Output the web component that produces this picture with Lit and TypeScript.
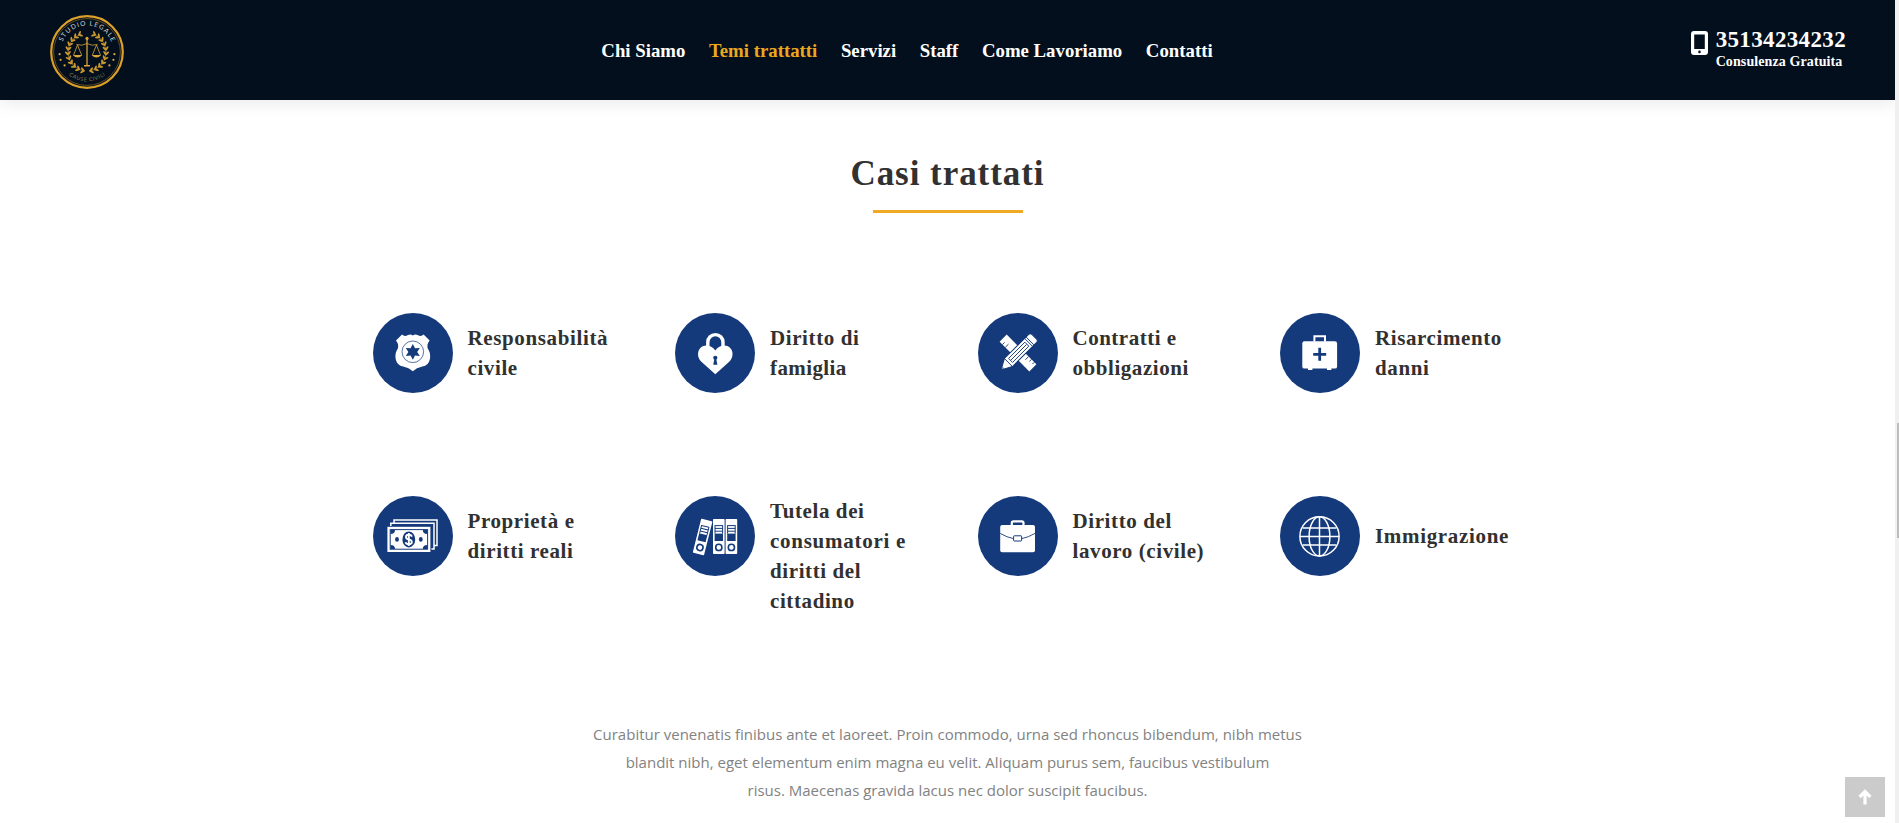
import { LitElement, html, svg, css } from "lit";
import { customElement, property } from "lit/decorators.js";

const INK = "#143a7b";

const badge = svg`
  <path fill="#fff" d="M29 21.5 Q31.5 24 35 22 Q37.5 20.5 39.8 22.6 Q42 20.5 44.6 22 Q48 24 50.6 21.5 L56.6 27.5 Q52.6 32.6 55.6 37 Q58 41 56.8 46.5 Q55.6 52.4 49.4 53.6 Q43.5 54.6 39.8 58.2 Q36 54.6 30.2 53.6 Q24 52.4 22.8 46.5 Q21.6 41 24 37 Q27 32.6 23 27.5 Z"/>
  <circle cx="39.8" cy="38.8" r="10.8" fill="none" stroke="${INK}" stroke-width=".7"/>
  <path fill="${INK}" d="M39.8 31 L42 35.2 L46.8 34.9 L44.2 38.9 L46.8 42.9 L42 42.6 L39.8 46.8 L37.6 42.6 L32.8 42.9 L35.4 38.9 L32.8 34.9 L37.6 35.2 Z"/>`;

const heartLock = svg`
  <path fill="none" stroke="#fff" stroke-width="3.4" d="M32.8 36 V29.2 A7.6 7.6 0 0 1 48 29.2 V36"/>
  <path fill="#fff" d="M40.3 37.6 C36.6 32 29.4 31 25.6 34.8 C21.8 38.6 22.4 45 26.4 48.8 L40.3 61.2 L54.2 48.8 C58.2 45 58.8 38.6 55 34.8 C51.2 31 44 32 40.3 37.6 Z"/>
  <circle cx="40.3" cy="44.8" r="2.1" fill="${INK}"/><path fill="${INK}" d="M39.5 45.5 H41.1 L42.4 51.8 H38.2 Z"/>`;

const tools = svg`
  <g transform="rotate(45 40 40)">
    <rect x="19" y="35" width="42" height="10" fill="#fff"/>
    <path stroke="${INK}" stroke-width=".9" d="M23 45 V42 M27 45 V40.5 M54 35 V38 M58 35 V37.5 M50 35 V39.5"/>
  </g>
  <g transform="rotate(-45 40 40)">
    <path fill="#fff" stroke="${INK}" stroke-width="1" d="M26.5 34.3 H60.4 Q63 34.3 63 37 V43 Q63 45.7 60.4 45.7 H26.5 L16 40 Z"/>
    <path fill="none" stroke="${INK}" stroke-width=".9" d="M26.5 34.5 V45.5 M55 34.5 V45.5 M57 34.5 V45.5 M29.5 37.2 H52.5 V42.8 H29.5 Z M30 40 H52"/>
    <path fill="${INK}" d="M16 40 L19.5 38.3 V41.7 Z" opacity=".5"/>
  </g>`;

const firstAid = svg`
  <path fill="none" stroke="#fff" stroke-width="2" d="M34.4 28.5 V23.3 H45 V28.5"/>
  <rect x="22.3" y="28.2" width="34.8" height="27.4" rx="2.2" fill="#fff"/>
  <path fill="#fff" d="M28 55 H32.4 V57 H28 Z M47 55 H51.4 V57 H47 Z"/>
  <path fill="none" stroke="${INK}" stroke-width="2.8" d="M39.7 34.8 V47.8 M33.2 41.3 H46.2"/>`;

const banknotes = svg`
  <path fill="none" stroke="#fff" stroke-width="1.5" d="M21 26.5 V24 H64 V49.5 H61.5 M17.8 30 V27.3 H61 V53 H58.4"/>
  <rect x="14.4" y="30.8" width="43" height="25.2" fill="#fff"/>
  <rect x="17.2" y="33.6" width="37.4" height="19.6" fill="none" stroke="${INK}" stroke-width="1"/>
  <path fill="${INK}" d="M17.5 34 H22 Q22 38 17.5 38 Z M54.3 34 H49.8 Q49.8 38 54.3 38 Z M17.5 53 H22 Q22 49 17.5 49 Z M54.3 53 H49.8 Q49.8 49 54.3 49 Z"/>
  <ellipse cx="35.8" cy="43.4" rx="6.4" ry="8" fill="${INK}"/>
  <ellipse cx="24" cy="43.4" rx="1.9" ry="2.4" fill="${INK}"/><ellipse cx="47.8" cy="43.4" rx="1.9" ry="2.4" fill="${INK}"/>
  <path fill="none" stroke="#fff" stroke-width="1.9" d="M39 40.6 Q38.2 38.8 35.8 38.8 Q33 38.8 33 41 Q33 43 35.8 43.4 Q38.8 43.9 38.8 46 Q38.8 48.2 35.8 48.2 Q33.2 48.2 32.5 46.2 M35.8 37 V50"/>`;

const binder = svg`
  <rect x="0" y="0" width="11.6" height="35" rx=".8" fill="#fff"/>
  <path fill="none" stroke="${INK}" stroke-width="1" d="M2 6.6 H9.6 M2 9.4 H9.6 M2 12.2 H9.6 M2 6.2 V14.6 M9.6 6.2 V14.6"/>
  <rect x="1.6" y="14.6" width="8.4" height="7.4" fill="${INK}"/>
  <circle cx="5.8" cy="28.4" r="3.1" fill="none" stroke="${INK}" stroke-width="1.6"/>`;

const binders = svg`
  <g transform="translate(26.2 22.6) rotate(14)">${binder}</g>
  <g transform="translate(38 23)">${binder}</g>
  <g transform="translate(50.6 23)">${binder}</g>`;

const briefcase = svg`
  <path fill="none" stroke="#fff" stroke-width="2.2" d="M33.8 29.5 V27 Q33.8 25.3 35.5 25.3 H43.8 Q45.5 25.3 45.5 27 V29.5"/>
  <rect x="22.2" y="29" width="34.8" height="27.2" rx="2" fill="#fff"/>
  <path fill="none" stroke="${INK}" stroke-width=".9" d="M22.2 37.4 Q29 41.4 35.4 42.6 M57 37.4 Q50.2 41.4 43.8 42.6"/>
  <rect x="35.6" y="39.8" width="8" height="5.2" rx=".6" fill="none" stroke="${INK}" stroke-width="1"/>`;

const globe = svg`
  <g fill="none" stroke="#fff" stroke-width="1.5">
    <circle cx="39.5" cy="40.4" r="19.6"/>
    <ellipse cx="39.5" cy="40.4" rx="10.4" ry="19.6"/>
    <path d="M39.5 20.8 V60 M19.9 40.4 H59.1 M22.6 32 H56.4 M22.6 49 H56.4"/>
  </g>`;

interface Line { text: string; track: number }
const cases: { icon: unknown; lines: Line[] }[] = [
  { icon: badge, lines: [{ text: "Responsabilità", track: 0.63 }, { text: "civile", track: 0.6 }] },
  { icon: heartLock, lines: [{ text: "Diritto di", track: 0.6 }, { text: "famiglia", track: 0.4 }] },
  { icon: tools, lines: [{ text: "Contratti e", track: 0.5 }, { text: "obbligazioni", track: 0.55 }] },
  { icon: firstAid, lines: [{ text: "Risarcimento", track: 0.6 }, { text: "danni", track: 0.6 }] },
  { icon: banknotes, lines: [{ text: "Proprietà e", track: 0.6 }, { text: "diritti reali", track: 0.6 }] },
  { icon: binders, lines: [{ text: "Tutela dei", track: 0.6 }, { text: "consumatori e", track: 0.73 }, { text: "diritti del", track: 0.6 }, { text: "cittadino", track: 0.6 }] },
  { icon: briefcase, lines: [{ text: "Diritto del", track: 0.6 }, { text: "lavoro (civile)", track: 0.6 }] },
  { icon: globe, lines: [{ text: "Immigrazione", track: 0.67 }] },
];

const links = ["Chi Siamo", "Temi trattatti", "Servizi", "Staff", "Come Lavoriamo", "Contatti"];

@customElement("firm-logo")
class FirmLogo extends LitElement {
  static styles = css`
    :host { display: block; width: 76px; height: 76px; }
    .mark { display: block; }
    .name { font: 6.6px "Lato", "Open Sans", sans-serif; fill: #d5d8d6; }
    .motto { font: 5.2px "Lato", "Open Sans", sans-serif; fill: #8b7a4a; }
  `;
  render() {
    const leaves = [];
    for (let i = 0; i < 11; i++) {
      const a = 100 + i * 14.5;
      leaves.push(svg`<g transform="rotate(${a} 38 38) translate(57 38)">
        <ellipse cx="1.6" cy="0" rx="2.5" ry="1" transform="rotate(48)"/>
        <ellipse cx="-1.6" cy="0" rx="2.5" ry="1" transform="rotate(-48)"/>
      </g>`);
    }
    const side = svg`<path fill="none" stroke="#c9982f" stroke-width=".6" d="M36 57 A19 19 0 0 1 31 20.4"/>${leaves}`;
    return html`<svg class="mark" width="76" height="76" viewBox="0 0 76 76">
      <circle cx="38" cy="38" r="35.8" fill="none" stroke="#dba02a" stroke-width="2.2"/>
      <circle cx="38" cy="38" r="33.4" fill="none" stroke="#7a5c20" stroke-width=".8"/>
      <path id="top" fill="none" d="M11.5 38 A26.5 26.5 0 0 1 64.5 38"/>
      <path id="bottom" fill="none" d="M8.6 38 A29.4 29.4 0 0 0 67.4 38"/>
      <text class="name" text-anchor="middle" textLength="62"><textPath href="#top" startOffset="50%" textLength="62">STUDIO LEGALE</textPath></text>
      <text class="motto" text-anchor="middle"><textPath href="#bottom" startOffset="50%" textLength="39">CAUSE CIVILI</textPath></text>
      <g fill="#c9982f">${side}</g>
      <g fill="#c9982f" transform="matrix(-1 0 0 1 76 0)">${side}</g>
      <g fill="none" stroke="#d9a43a" stroke-width=".8">
        <path stroke-width="1.3" d="M38 24 V51"/>
        <path d="M27.5 30.5 Q33 32.4 38 29.5 Q43 32.4 48.5 30.5 M28.5 31 L24.6 41 M28.5 31 L32.6 41 M47.5 31 L43.4 41 M47.5 31 L51.4 41"/>
      </g>
      <g fill="#d9a43a">
        <path d="M23.8 41 H33.4 Q28.6 46 23.8 41 Z M42.6 41 H52.2 Q47.4 46 42.6 41 Z M35 51 H41 V52.4 H35 Z"/>
        <circle cx="38" cy="24.4" r="1.6"/>
        <circle cx="10.6" cy="40.2" r="1.1"/><circle cx="11.6" cy="45.8" r="1.1"/><circle cx="15.6" cy="51.4" r="1.1"/>
        <circle cx="65.4" cy="40.2" r="1.1"/><circle cx="64.4" cy="45.8" r="1.1"/><circle cx="60.4" cy="51.4" r="1.1"/>
      </g>
    </svg>`;
  }
}

@customElement("case-card")
class CaseCard extends LitElement {
  @property({ attribute: false }) icon: unknown;
  @property({ attribute: false }) lines: Line[] = [];
  static styles = css`
    :host { display: flex; align-items: flex-start; gap: 15px; padding-left: 30px; }
    .disc { flex: none; display: block; width: 80px; height: 80px; border-radius: 50%; background: #143a7b; }
    .label { margin: 0; min-height: 80px; display: flex; flex-direction: column; justify-content: center; font: bold 21px/30px "Liberation Serif", serif; color: #313131; white-space: nowrap; }
    .line { display: block; }
  `;
  render() {
    return html`<svg class="disc" viewBox="0 0 80 80">${this.icon}</svg>
      <h3 class="label">${this.lines.map((l) => html`<span class="line" style="letter-spacing:${l.track}px">${l.text}</span>`)}</h3>`;
  }
}

@customElement("app-root")
class AppRoot extends LitElement {
  static styles = css`
    :host { display: flex; position: relative; height: 823px; overflow: hidden; background: #fff; font-family: "Liberation Serif", serif; }
    .page { flex: 1; display: flex; flex-direction: column; align-items: center; }
    .bar { align-self: stretch; box-sizing: border-box; height: 100px; flex: none; display: grid; grid-template-columns: 1fr auto 1fr; align-items: center; padding: 0 49px; background: #030f1c; box-shadow: 0 2px 18px rgba(0, 0, 0, 0.1); color: #fff; }
    .logo { margin-top: 3px; }
    .nav { display: flex; gap: 23.6px; font: bold 18.8px/28px "Liberation Serif", serif; margin-right: 81px; margin-top: 2px; }
    .link { color: #fff; text-decoration: none; white-space: nowrap; }
    .active { color: #eda71f; }
    .call { justify-self: end; display: flex; gap: 8px; }
    .phone { margin-top: 3px; }
    .number { font: bold 23px/24px "Liberation Serif", serif; letter-spacing: 0.35px; }
    .note { font: bold 14px/20px "Liberation Serif", serif; letter-spacing: 0.1px; }
    .title { margin: 51px 0 0; font: bold 35px/45px "Liberation Serif", serif; letter-spacing: 0.95px; color: #313131; }
    .rule { width: 150px; height: 3px; margin-top: 14px; background: #f0a922; }
    .grid { width: 1210px; margin-top: 100px; display: grid; grid-template-columns: repeat(4, 1fr); row-gap: 103px; }
    .blurb { margin: 104px 0 0; text-align: center; font: 15px/28px "Open Sans", sans-serif; color: #828282; }
    .track { width: 4px; flex: none; box-sizing: border-box; padding: 423px 0 0 2px; background: #f0f0f0; }
    .thumb { height: 115px; background: #bdbdbd; }
    .up { position: absolute; right: 14px; bottom: 6px; width: 40px; height: 40px; padding: 0; border: 0; background: #cbcbcb; display: grid; place-items: center; }
  `;
  render() {
    return html`
      <div class="page">
        <header class="bar">
          <firm-logo class="logo"></firm-logo>
          <nav class="nav">${links.map((t) => html`<a class="link ${t.startsWith("Temi") ? "active" : ""}">${t}</a>`)}</nav>
          <div class="call">
            <svg class="phone" width="17" height="24" viewBox="0 0 17 24"><path fill="#fff" fill-rule="evenodd" d="M3 0 H14 Q17 0 17 3 V21 Q17 24 14 24 H3 Q0 24 0 21 V3 Q0 0 3 0 Z M3.2 3.4 V18 H13.8 V3.4 Z M8.5 19.6 A1.3 1.3 0 1 0 8.5 22.2 A1.3 1.3 0 1 0 8.5 19.6 Z"/></svg>
            <div><div class="number">35134234232</div><div class="note">Consulenza Gratuita</div></div>
          </div>
        </header>
        <h1 class="title">Casi trattati</h1>
        <div class="rule"></div>
        <section class="grid">${cases.map((c) => html`<case-card .icon=${c.icon} .lines=${c.lines}></case-card>`)}</section>
        <p class="blurb">Curabitur venenatis finibus ante et laoreet. Proin commodo, urna sed rhoncus bibendum, nibh metus<br>blandit nibh, eget elementum enim magna eu velit. Aliquam purus sem, faucibus vestibulum<br>risus. Maecenas gravida lacus nec dolor suscipit faucibus.</p>
      </div>
      <div class="track"><div class="thumb"></div></div>
      <button class="up"><svg width="14" height="16" viewBox="0 0 14 16"><path fill="none" stroke="#fff" stroke-width="3.2" d="M7 15.5 V2.5 M1.6 8 L7 2.6 L12.4 8"/></svg></button>`;
  }
}
